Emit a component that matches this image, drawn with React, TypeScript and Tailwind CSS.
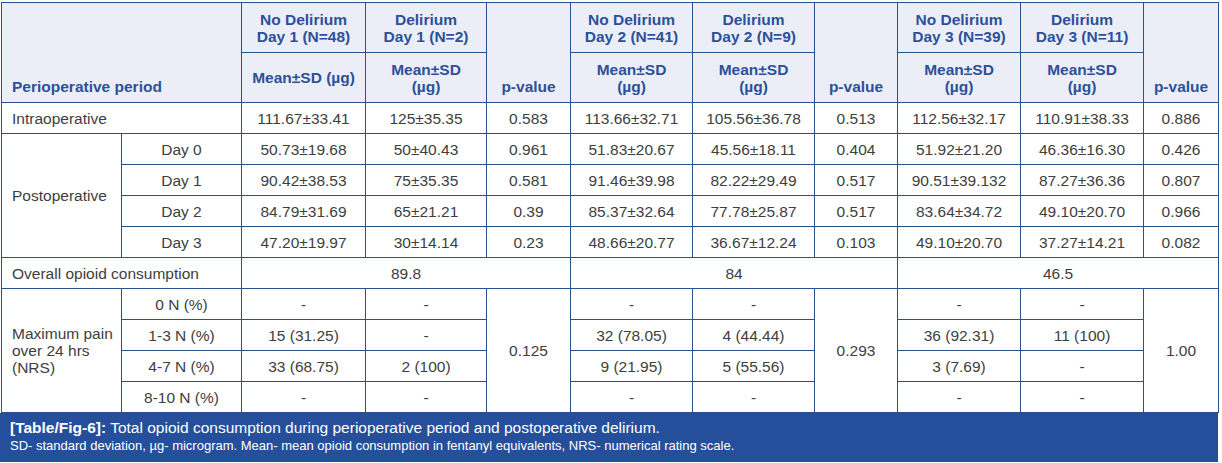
import React from "react";

const B = "border border-[#2c4f8e]";
const TH = `${B} text-[#2c519a] font-bold text-[15.5px] leading-[17px] text-center align-middle p-0`;
const TD = `${B} text-[#3e3e3e] text-[15.5px] leading-[17px] text-center align-middle p-0 h-[31px]`;

const body: { label: string; vals: string[] }[] = [
  { label: "Day 0", vals: ["50.73±19.68", "50±40.43", "0.961", "51.83±20.67", "45.56±18.11", "0.404", "51.92±21.20", "46.36±16.30", "0.426"] },
  { label: "Day 1", vals: ["90.42±38.53", "75±35.35", "0.581", "91.46±39.98", "82.22±29.49", "0.517", "90.51±39.132", "87.27±36.36", "0.807"] },
  { label: "Day 2", vals: ["84.79±31.69", "65±21.21", "0.39", "85.37±32.64", "77.78±25.87", "0.517", "83.64±34.72", "49.10±20.70", "0.966"] },
  { label: "Day 3", vals: ["47.20±19.97", "30±14.14", "0.23", "48.66±20.77", "36.67±12.24", "0.103", "49.10±20.70", "37.27±14.21", "0.082"] },
];

const pain: { label: string; vals: string[] }[] = [
  { label: "0 N (%)", vals: ["-", "-", "-", "-", "-", "-"] },
  { label: "1-3 N (%)", vals: ["15 (31.25)", "-", "32 (78.05)", "4 (44.44)", "36 (92.31)", "11 (100)"] },
  { label: "4-7 N (%)", vals: ["33 (68.75)", "2 (100)", "9 (21.95)", "5 (55.56)", "3 (7.69)", "-"] },
  { label: "8-10 N (%)", vals: ["-", "-", "-", "-", "-", "-"] },
];

const pvals = ["0.125", "0.293", "1.00"];

export default function App() {
  return (
    <div
      className="w-[1222px] h-[463px] bg-white overflow-hidden pt-[2px]"
      style={{ fontFamily: '"Liberation Sans", Arial, sans-serif' }}
    >
      <div className="w-[1218px]">
        <table className="table-fixed border-collapse w-[1217px] ml-[1px]">
          <colgroup>
            <col className="w-[120px]" />
            <col className="w-[120px]" />
            <col className="w-[124px]" />
            <col className="w-[121px]" />
            <col className="w-[84px]" />
            <col className="w-[122px]" />
            <col className="w-[122px]" />
            <col className="w-[83px]" />
            <col className="w-[123px]" />
            <col className="w-[123px]" />
            <col className="w-[75px]" />
          </colgroup>
          <thead className="bg-[#eceef7]">
            <tr className="h-[50px]">
              <th colSpan={2} rowSpan={2} className={`${TH} !text-left !align-bottom pl-[10px] pb-[7px]`}>
                Perioperative period
              </th>
              <th className={TH}>No Delirium<br />Day 1 (N=48)</th>
              <th className={TH}>Delirium<br />Day 1 (N=2)</th>
              <th rowSpan={2} className={`${TH} !align-bottom pb-[7px]`}>p-value</th>
              <th className={TH}>No Delirium<br />Day 2 (N=41)</th>
              <th className={TH}>Delirium<br />Day 2 (N=9)</th>
              <th rowSpan={2} className={`${TH} !align-bottom pb-[7px]`}>p-value</th>
              <th className={TH}>No Delirium<br />Day 3 (N=39)</th>
              <th className={TH}>Delirium<br />Day 3 (N=11)</th>
              <th rowSpan={2} className={`${TH} !align-bottom pb-[7px]`}>p-value</th>
            </tr>
            <tr className="h-[50px]">
              <th className={`${TH} whitespace-nowrap`}>Mean±SD (µg)</th>
              <th className={TH}>Mean±SD<br />(µg)</th>
              <th className={TH}>Mean±SD<br />(µg)</th>
              <th className={TH}>Mean±SD<br />(µg)</th>
              <th className={TH}>Mean±SD<br />(µg)</th>
              <th className={TH}>Mean±SD<br />(µg)</th>
            </tr>
          </thead>
          <tbody>
            <tr>
              <td colSpan={2} className={`${TD} !text-left pl-[10px]`}>Intraoperative</td>
              {["111.67±33.41", "125±35.35", "0.583", "113.66±32.71", "105.56±36.78", "0.513", "112.56±32.17", "110.91±38.33", "0.886"].map((v, i) => (
                <td key={i} className={TD}>{v}</td>
              ))}
            </tr>
            {body.map((r, ri) => (
              <tr key={r.label}>
                {ri === 0 && (
                  <td rowSpan={4} className={`${TD} !text-left pl-[10px]`}>Postoperative</td>
                )}
                <td className={TD}>{r.label}</td>
                {r.vals.map((v, i) => (
                  <td key={i} className={TD}>{v}</td>
                ))}
              </tr>
            ))}
            <tr>
              <td colSpan={2} className={`${TD} !text-left pl-[10px]`}>Overall opioid consumption</td>
              <td colSpan={3} className={TD}>89.8</td>
              <td colSpan={3} className={TD}>84</td>
              <td colSpan={3} className={TD}>46.5</td>
            </tr>
            {pain.map((r, ri) => (
              <tr key={r.label}>
                {ri === 0 && (
                  <td rowSpan={4} className={`${TD} !text-left pl-[10px] pr-[4px]`}>
                    Maximum pain over 24 hrs (NRS)
                  </td>
                )}
                <td className={`${TD} ${ri === 3 ? "!h-[30px]" : ""}`}>{r.label}</td>
                {[0, 1, 2].map((g) => (
                  <React.Fragment key={g}>
                    <td className={TD}>{r.vals[g * 2]}</td>
                    <td className={TD}>{r.vals[g * 2 + 1]}</td>
                    {ri === 0 && (
                      <td rowSpan={4} className={TD}>{pvals[g]}</td>
                    )}
                  </React.Fragment>
                ))}
              </tr>
            ))}
          </tbody>
        </table>
        <div className="bg-[#254f9b] text-white h-[49px] pl-[10px] pt-[5px]">
          <div className="text-[15.5px] leading-[19px]">
            <span className="font-bold">[Table/Fig-6]:</span> Total opioid consumption during perioperative period and postoperative delirium.
          </div>
          <div className="text-[13px] leading-[18px]">
            SD- standard deviation, µg- microgram. Mean- mean opioid consumption in fentanyl equivalents, NRS- numerical rating scale.
          </div>
        </div>
      </div>
    </div>
  );
}
